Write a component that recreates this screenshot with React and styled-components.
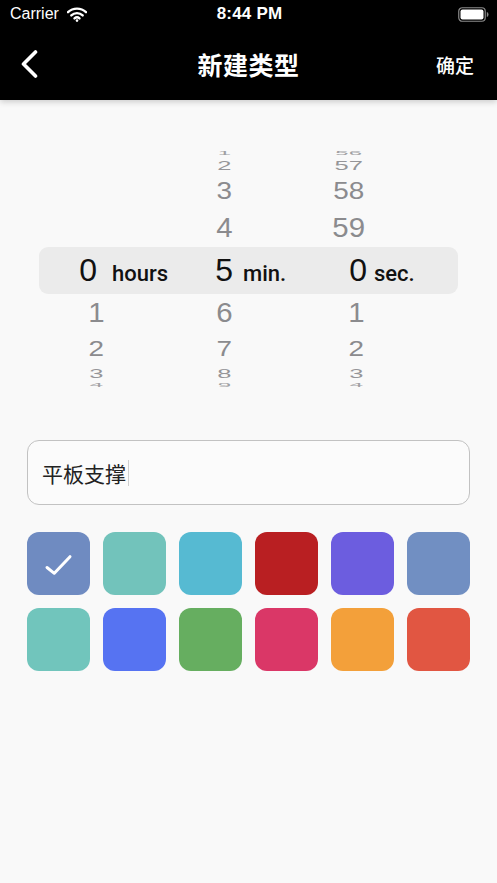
import React from "react";
import styled, { createGlobalStyle } from "styled-components";

const Global = createGlobalStyle`
  html, body { margin: 0; padding: 0; background: #f9f9f9; }
  body { font-family: "Liberation Sans", "Noto Sans CJK SC", sans-serif; }
  * { box-sizing: border-box; }
`;

const Page = styled.div`
  width: 497px;
  min-height: 883px;
  background: #f9f9f9;
  display: flex;
  flex-direction: column;
`;

const Header = styled.header`
  background: #000;
  color: #fff;
  box-shadow: 0 2px 6px rgba(0, 0, 0, 0.18);
  position: relative;
  z-index: 1;
`;

const StatusBar = styled.div`
  height: 28px;
  display: grid;
  grid-template-columns: 1fr auto 1fr;
  align-items: center;
  padding: 0 8px 0 10px;
`;

const StatusLeft = styled.div`
  display: flex;
  align-items: center;
  gap: 8px;
  font-size: 16px;
  font-family: "Liberation Sans", sans-serif;
`;

const StatusTime = styled.div`
  font-size: 17px;
  font-weight: 700;
  font-family: "Liberation Sans", sans-serif;
  letter-spacing: 0.2px;
`;

const StatusRight = styled.div`
  display: flex;
  justify-content: flex-end;
  align-items: center;
`;

const NavBar = styled.div`
  height: 72px;
  display: grid;
  grid-template-columns: 80px 1fr 80px;
  align-items: center;
`;

const BackButton = styled.div`
  padding-left: 20px;
  display: flex;
  align-items: center;
`;

const Title = styled.h1`
  margin: 0;
  text-align: center;
  font-size: 25px;
  font-weight: 700;
  font-family: "Noto Sans CJK SC", sans-serif;
  letter-spacing: 0.5px;
`;

const Confirm = styled.div`
  text-align: right;
  padding-right: 23px;
  font-size: 19px;
  font-weight: 500;
  font-family: "Noto Sans CJK SC", sans-serif;
`;

const Picker = styled.div`
  position: relative;
  margin: 48px 39px 0 39px;
  display: grid;
  grid-template-columns: 136px 125px 1fr;
`;

const Band = styled.div`
  position: absolute;
  left: 0;
  right: 0;
  top: 99px;
  height: 47px;
  border-radius: 9px;
  background: #ebebeb;
`;

const Column = styled.div`
  position: relative;
  display: flex;
  flex-direction: column;
`;

const Row = styled.div`
  height: ${(p) => p.$h}px;
  display: flex;
  align-items: ${(p) => (p.$selected ? "baseline" : "center")};
  line-height: ${(p) => p.$h}px;
  overflow: visible;
`;

const DigitCell = styled.div`
  width: ${(p) => p.$w}px;
  text-align: right;
  font-family: "Liberation Sans", sans-serif;
  font-size: ${(p) => (p.$selected ? 32 : 30)}px;
  color: ${(p) => (p.$selected ? "#111" : "#8b8b8e")};
  opacity: ${(p) => p.$fade};
`;

const Digit = styled.span`
  display: inline-block;
  transform: scale(${(p) => p.$sx}, ${(p) => p.$sy});
  transform-origin: center center;
`;

const Unit = styled.span`
  margin-left: ${(p) => p.$gap}px;
  font-family: Roboto, "Liberation Sans", sans-serif;
  font-size: 22px;
  font-weight: 500;
  color: #111;
`;

const Content = styled.div`
  padding: 0 27px;
`;

const Field = styled.div`
  margin-top: 51px;
  height: 65px;
  border: 1px solid #c2c2c2;
  border-radius: 12px;
  background: #fbfbfb;
  display: flex;
  align-items: center;
  padding-left: 14px;
  font-family: "Noto Sans CJK SC", sans-serif;
  font-size: 21px;
  color: #222;
`;

const Caret = styled.span`
  display: inline-block;
  width: 1px;
  height: 26px;
  margin-left: 2px;
  background: #cfcfcf;
`;

const Swatches = styled.div`
  margin-top: 27px;
  display: grid;
  grid-template-columns: repeat(6, 63px);
  grid-auto-rows: 63px;
  column-gap: 13px;
  row-gap: 13px;
`;

const Swatch = styled.div`
  border-radius: 12px;
  background: ${(p) => p.$c};
  display: flex;
  align-items: center;
  justify-content: center;
`;

const ROWS = [
  { o: -4, h: 10, sx: 0.8, sy: 0.15, f: 0.8 },
  { o: -3, h: 16, sx: 0.85, sy: 0.45, f: 0.9 },
  { o: -2, h: 34, sx: 0.93, sy: 0.78, f: 1 },
  { o: -1, h: 40, sx: 0.98, sy: 0.9, f: 1 },
  { o: 0, h: 45, sx: 1, sy: 1, f: 1 },
  { o: 1, h: 40, sx: 0.98, sy: 0.9, f: 1 },
  { o: 2, h: 30, sx: 0.93, sy: 0.75, f: 1 },
  { o: 3, h: 20, sx: 0.85, sy: 0.45, f: 0.9 },
  { o: 4, h: 6, sx: 0.8, sy: 0.15, f: 0.8 },
];

const COLUMNS = [
  { value: 0, max: 24, wrap: false, unit: "hours", w: 66, sw: 58, gap: 15 },
  { value: 5, max: 60, wrap: true, unit: "min.", w: 58, sw: 58, gap: 10 },
  { value: 0, max: 60, wrap: true, unit: "sec.", w: 65, sw: 67, gap: 7 },
];

const COLORS = [
  "#6f8bc1", "#72c3bb", "#56bad2", "#b91f22", "#6c5ddf", "#718fc2",
  "#71c5bc", "#5673f2", "#66ae60", "#da3767", "#f3a03a", "#e15642",
];

function valueAt(col, o) {
  let v = col.value + o;
  if (v < 0) {
    if (!col.wrap) return "";
    v += col.max;
  }
  if (v >= col.max) {
    if (!col.wrap) return "";
    v -= col.max;
  }
  return String(v);
}

const Wifi = () => (
  <svg width="20" height="15" viewBox="0 0 20 15">
    <path d="M1 5.2 A13 13 0 0 1 19 5.2" fill="none" stroke="#fff" strokeWidth="2.4" strokeLinecap="round" />
    <path d="M4.3 8.4 A8.3 8.3 0 0 1 15.7 8.4" fill="none" stroke="#fff" strokeWidth="2.4" strokeLinecap="round" />
    <path d="M7.5 11.4 A3.8 3.8 0 0 1 12.5 11.4" fill="none" stroke="#fff" strokeWidth="2.4" strokeLinecap="round" />
    <circle cx="10" cy="13.6" r="1.3" fill="#fff" />
  </svg>
);

const Battery = () => (
  <svg width="31" height="15" viewBox="0 0 31 15">
    <rect x="0.75" y="0.75" width="26.5" height="13.5" rx="3.5" fill="none" stroke="#8a8a8a" strokeWidth="1.2" />
    <rect x="2.5" y="2.5" width="23" height="10" rx="2" fill="#fff" />
    <path d="M28.8 5 Q30.5 5.3 30.5 7.5 Q30.5 9.7 28.8 10 Z" fill="#8a8a8a" />
  </svg>
);

const Chevron = () => (
  <svg width="20" height="28" viewBox="0 0 20 28">
    <polyline points="15.5,2 3.5,14 15.5,26" fill="none" stroke="#fff" strokeWidth="3.6" strokeLinecap="round" strokeLinejoin="round" />
  </svg>
);

const Check = () => (
  <svg width="63" height="63" viewBox="0 0 63 63">
    <polyline points="20,35.5 27.3,41.3 43,24.7" fill="none" stroke="#fff" strokeWidth="3" strokeLinecap="round" strokeLinejoin="round" />
  </svg>
);

export default function App() {
  return (
    <Page>
      <Global />
      <Header>
        <StatusBar>
          <StatusLeft>
            Carrier
            <Wifi />
          </StatusLeft>
          <StatusTime>8:44 PM</StatusTime>
          <StatusRight>
            <Battery />
          </StatusRight>
        </StatusBar>
        <NavBar>
          <BackButton>
            <Chevron />
          </BackButton>
          <Title>新建类型</Title>
          <Confirm>确定</Confirm>
        </NavBar>
      </Header>

      <Picker>
        <Band />
        {COLUMNS.map((col, ci) => (
          <Column key={ci}>
            {ROWS.map((r) => {
              const sel = r.o === 0;
              return (
                <Row key={r.o} $h={r.h} $selected={sel}>
                  <DigitCell $w={sel ? col.sw : col.w} $selected={sel} $fade={r.f}>
                    <Digit $sx={r.sx} $sy={r.sy}>{valueAt(col, r.o)}</Digit>
                  </DigitCell>
                  {sel && <Unit $gap={col.gap}>{col.unit}</Unit>}
                </Row>
              );
            })}
          </Column>
        ))}
      </Picker>

      <Content>
        <Field>
          平板支撑
          <Caret />
        </Field>
        <Swatches>
          {COLORS.map((c, i) => (
            <Swatch key={i} $c={c}>
              {i === 0 && <Check />}
            </Swatch>
          ))}
        </Swatches>
      </Content>
    </Page>
  );
}
